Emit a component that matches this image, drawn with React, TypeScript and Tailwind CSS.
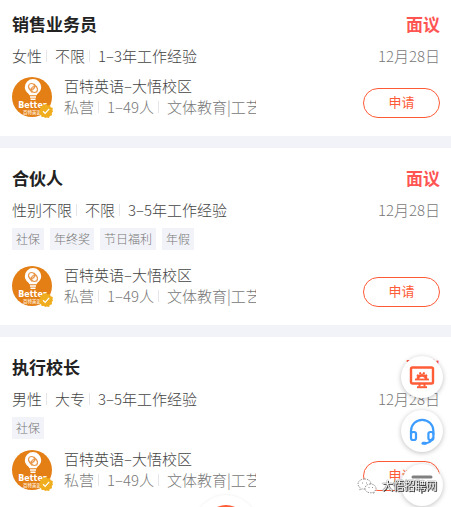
import { Fragment } from "react"

type Job = {
  title: string
  salary: string
  requirements: string[]
  date: string
  tags: string[]
  spacing: string
  companySpacing: string
}

const jobs: Job[] = [
  {
    title: "销售业务员",
    salary: "面议",
    requirements: ["女性", "不限", "1–3年工作经验"],
    date: "12月28日",
    tags: [],
    spacing: "pt-3",
    companySpacing: "mt-2",
  },
  {
    title: "合伙人",
    salary: "面议",
    requirements: ["性别不限", "不限", "3–5年工作经验"],
    date: "12月28日",
    tags: ["社保", "年终奖", "节日福利", "年假"],
    spacing: "pt-[18px]",
    companySpacing: "mt-[14px]",
  },
  {
    title: "执行校长",
    salary: "面议",
    requirements: ["男性", "大专", "3–5年工作经验"],
    date: "12月28日",
    tags: ["社保"],
    spacing: "pt-[18px]",
    companySpacing: "mt-[9px]",
  },
]

const companyInfo = ["私营", "1–49人", "文体教育|工艺"]

function Separated({ items }: { items: string[] }) {
  return (
    <>
      {items.map((item, i) => (
        <Fragment key={i}>
          {i > 0 && <span className="ml-1 mr-2 h-3 w-px shrink-0 bg-[#e6e6ea]" />}
          <span className="shrink-0">{item}</span>
        </Fragment>
      ))}
    </>
  )
}

function CompanyLogo() {
  return (
    <div className="relative size-10 shrink-0">
      <svg viewBox="0 0 40 40" className="size-10">
        <circle cx="20" cy="20" r="20" fill="#e47f16" />
        <path
          d="M21 2a8.200 8.200 0 0 0-8.200 8.200c0 3 1.700 4.500 3.200 6.100.7.800 1.200 1.200 1.400 1.900h7.200c.2-.7.700-1.100 1.400-1.900 1.500-1.600 3.200-3.100 3.200-6.100A8.200 8.200 0 0 0 21 2z"
          fill="#fff"
        />
        <g fill="none" stroke="#e9974a" strokeWidth="1.200">
          <circle cx="19.500" cy="9.500" r="3" />
          <circle cx="22.500" cy="12.500" r="3" />
          <path d="M17.300 12l2.800 3.300M21.800 6.800l3.200 3.400" />
        </g>
        <path d="M18 20h6M18.500 22.300h5" stroke="#fff" strokeWidth="1.500" />
        <text x="20.500" y="30.500" textAnchor="middle" fontSize="8" fontWeight="700" fill="#fff" fontFamily="'DejaVu Sans', sans-serif">
          Better
        </text>
        <text x="20" y="36.500" textAnchor="middle" fontSize="4.500" fontWeight="700" fill="#fbe3c8" fontFamily="'Noto Sans CJK SC', sans-serif">
          百特英语
        </text>
      </svg>
      <svg viewBox="0 0 14 14" className="absolute -bottom-px -right-px size-[14px]">
        <path
          d="M7 0l1.700 1.400 2.200-.3.800 2.100 2.100.8-.3 2.200L14 7.500l-1.200 1.600.2 2.200-2.100.7-.9 1.900-2.200-.3L6.500 14l-1.600-1.100-2.200.1-.7-2-1.900-1 .4-2.100L0 6.500l1.200-1.700 0-2.200 2.100-.6L4.400.200l2 .5z"
          fill="#f0ad1d"
        />
        <path d="M4 7.200l2.200 2.200 4-4.500" fill="none" stroke="#fff" strokeWidth="1.300" />
      </svg>
    </div>
  )
}

function JobCard({ job }: { job: Job }) {
  return (
    <article className={`bg-white pr-[11px] pb-[19px] pl-3 ${job.spacing}`}>
      <div className="flex items-center justify-between text-[17px] leading-6 font-bold">
        <h2 className="text-[#222]">{job.title}</h2>
        <span className="text-[#ff5552]">{job.salary}</span>
      </div>

      <div className="mt-[9px] flex items-center justify-between text-[15px] leading-[22px]">
        <div className="flex items-center text-[#444]">
          <Separated items={job.requirements} />
        </div>
        <time className="text-[#777]">{job.date}</time>
      </div>

      {job.tags.length > 0 && (
        <ul className="mt-[7px] flex flex-wrap gap-[6px]">
          {job.tags.map((tag) => (
            <li key={tag} className="bg-[#f2f3f9] px-1 text-[12px] leading-[22px] text-[#777]">
              {tag}
            </li>
          ))}
        </ul>
      )}

      <div className={`flex items-end ${job.companySpacing}`}>
        <CompanyLogo />
        <div className="ml-3 w-48 overflow-hidden text-[15px] leading-[21px] whitespace-nowrap">
          <div className="text-[#444]">百特英语–大悟校区</div>
          <div className="flex items-center text-[#777]">
            <Separated items={companyInfo} />
          </div>
        </div>
        <button
          type="button"
          className="-mb-px ml-auto h-[30px] w-[77px] shrink-0 rounded-full border border-[#ff5a36] pb-[2px] text-[13px] leading-5 font-normal text-[#ff5a36]"
        >
          申请
        </button>
      </div>
    </article>
  )
}

function FloatingActions() {
  const circle = "flex size-[42px] items-center justify-center rounded-full bg-white shadow-[0_1px_5px_rgba(0,0,0,0.25)]"
  return (
    <div className="fixed right-2 bottom-px flex flex-col gap-3">
      <button type="button" aria-label="职位管理" className={circle}>
        <svg viewBox="0 0 26 24" className="h-6 w-[26px]" fill="none" stroke="#ff5c38">
          <rect x="2" y="2.500" width="22" height="16" rx="1.500" strokeWidth="2.400" />
          <path d="M6 14.500h14" strokeWidth="1.800" />
          <path d="M8.800 14.500a4.200 4.200 0 0 1 8.400 0" strokeWidth="2.800" />
          <path d="M8 10l2 1.500M10.800 7.300l.8 2M15.200 7.300l-.8 2M18 10l-2 1.500" strokeWidth="2.200" />
          <path d="M10.500 18v3.500M15.500 18v3.500" strokeWidth="2" />
          <path d="M8 22.200h10" strokeWidth="2" />
        </svg>
      </button>
      <button type="button" aria-label="客服" className={circle}>
        <svg viewBox="0 0 28 30" className="h-[30px] w-7" fill="none" stroke="#3c9cff" strokeWidth="2.200" strokeLinecap="round">
          <path d="M3 18v-3a11.200 11.200 0 0 1 22.400 0v3" />
          <rect x="3" y="16" width="5" height="8" rx="2" />
          <rect x="20.400" y="16" width="5" height="8" rx="2" />
          <path d="M24.500 22.500c-1 3-3.500 4.500-8 5" />
          <path d="M15 27.300h2.500" strokeWidth="3" />
        </svg>
      </button>
      <button type="button" aria-label="返回顶部" className={circle}>
        <svg viewBox="0 0 22 22" className="size-[22px]" fill="none" stroke="#808080" strokeLinecap="round">
          <path d="M2 3h18" strokeWidth="3" />
          <path d="M11 19V10M6 14l5-4 5 4" strokeWidth="2" />
        </svg>
      </button>
    </div>
  )
}

function AccountMark() {
  return (
    <div className="fixed right-[14px] bottom-3 flex items-center gap-[5px]">
      <svg viewBox="0 0 20 16" className="h-4 w-5" fill="#fff" stroke="#777" strokeWidth="0.800" strokeDasharray="1.500 1">
        <path d="M7.500 1C3.800 1 1 3.200 1 6c0 1.600.9 3 2.300 3.900L2.800 12l2.400-1.200c.7.200 1.500.3 2.300.3 3.700 0 6.500-2.300 6.500-5.100S11.200 1 7.500 1z" />
        <path d="M13.500 6C10.400 6 8 8 8 10.400s2.400 4.400 5.500 4.400c.7 0 1.300-.1 1.900-.3l2 1-.5-1.700c1.300-.8 2.100-2 2.100-3.400C19 8 16.600 6 13.500 6z" />
        <path d="M5 5h1M9 5h1M11.500 9.500h1M15 9.500h1" strokeDasharray="none" />
      </svg>
      <span className="pb-[2px] text-[11px] leading-4 font-normal text-white [text-shadow:1px_1px_0_#333,0_0_1px_#333,0_0_1px_#333]">
        大悟招聘网
      </span>
    </div>
  )
}

export default function App() {
  return (
    <div className="relative h-screen overflow-hidden bg-[#f2f3f9] font-['Noto_Sans_CJK_SC',sans-serif] font-light">
      <main className="flex flex-col gap-3">
        {jobs.map((job) => (
          <JobCard key={job.title} job={job} />
        ))}
      </main>

      {/* raised centre button of the tab bar */}
      <button
        type="button"
        aria-label="发布"
        className="absolute -bottom-[52px] left-1/2 flex size-16 -translate-x-1/2 items-center justify-center rounded-full bg-white shadow-[0_0_3px_rgba(0,0,0,0.08)]"
      >
        <span className="size-11 rounded-full bg-[#ff5c38]" />
      </button>

      <FloatingActions />
      <AccountMark />
    </div>
  )
}
